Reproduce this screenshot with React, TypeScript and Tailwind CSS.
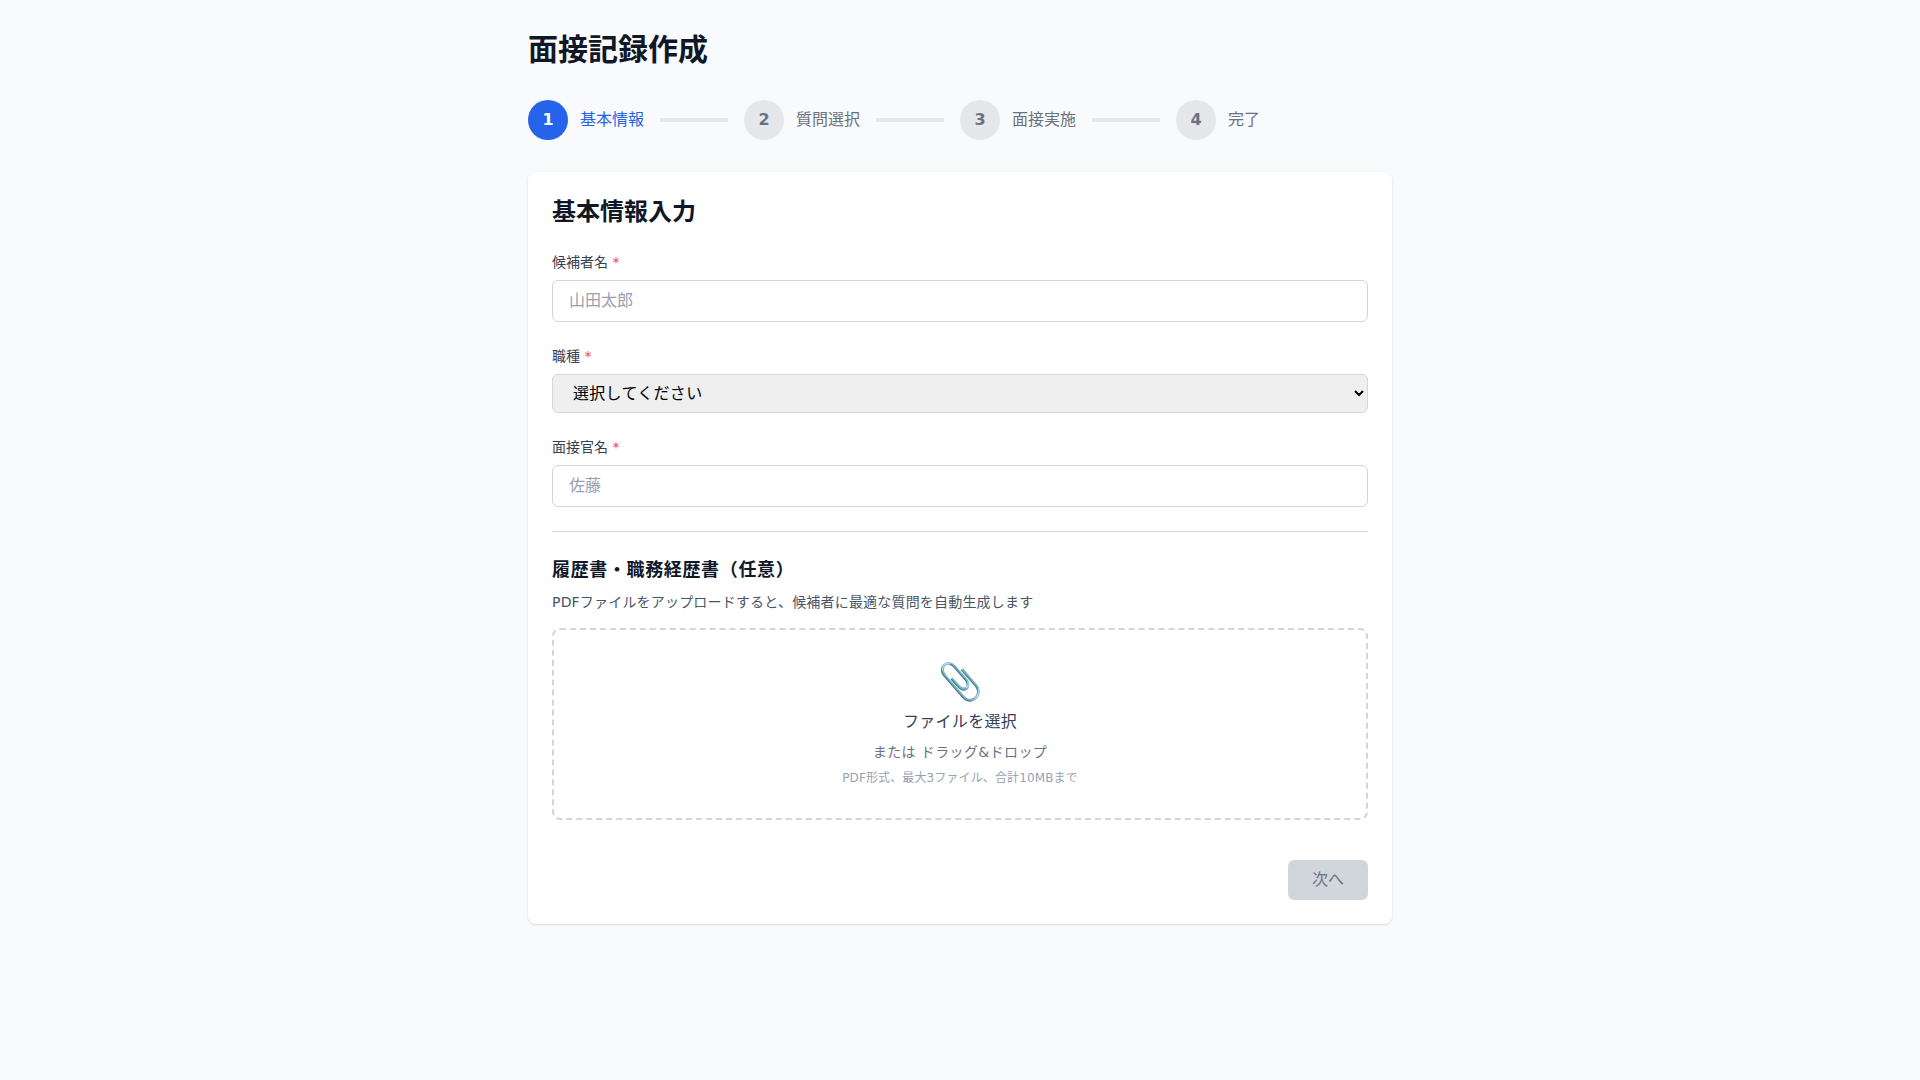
import { Fragment } from "react";

const steps = ["基本情報", "質問選択", "面接実施", "完了"];

function Label({ children }: { children: string }) {
	return (
		<label className="mb-2 block text-sm text-gray-700">
			{children} <span className="text-[#ef4444]">*</span>
		</label>
	);
}

export default function App() {
	return (
		<div className="min-h-screen bg-gray-50 font-['DejaVu_Sans','Noto_Sans_CJK_JP',sans-serif]">
			<div className="mx-auto max-w-4xl px-4 py-8">
				<h1 className="mb-8 text-3xl font-bold text-gray-900">面接記録作成</h1>
				<div className="mb-8 flex items-center">
					{steps.map((step, index) => (
						<Fragment key={step}>
							<div
								className={
									index === 0
										? "flex h-10 w-10 items-center justify-center rounded-full bg-[#2563eb] font-semibold text-white"
										: "flex h-10 w-10 items-center justify-center rounded-full bg-gray-200 font-semibold text-gray-500"
								}
							>
								{index + 1}
							</div>
							<span
								className={
									index === 0 ? "ml-3 text-[#2563eb]" : "ml-3 text-gray-500"
								}
							>
								{step}
							</span>
							{index < 3 && <div className="mx-4 h-1 w-[68px] bg-gray-200" />}
						</Fragment>
					))}
				</div>
				<div className="rounded-lg bg-white p-6 shadow">
					<h2 className="mb-6 text-2xl font-semibold text-gray-900">
						基本情報入力
					</h2>
					<div className="mb-6">
						<Label>候補者名</Label>
						<input
							placeholder="山田太郎"
							className="block w-full rounded-md border border-gray-300 px-4 py-2 placeholder:text-gray-400"
						/>
					</div>
					<div className="mb-6">
						<Label>職種</Label>
						<select className="block w-full rounded-md border border-gray-300 bg-[#efefef] px-4 py-2 tracking-[0.3px] text-black">
							<option>選択してください</option>
						</select>
					</div>
					<div className="mb-6">
						<Label>面接官名</Label>
						<input
							placeholder="佐藤"
							className="block w-full rounded-md border border-gray-300 px-4 py-2 placeholder:text-gray-400"
						/>
					</div>
					<div className="border-t border-gray-300 pt-6">
						<h3 className="mb-2 text-lg font-semibold tracking-[0.64px] text-gray-900">
							履歴書・職務経歴書（任意）
						</h3>
						<p className="mb-4 text-sm tracking-[0.19px] text-gray-600">
							PDFファイルをアップロードすると、候補者に最適な質問を自動生成します
						</p>
						<div className="rounded-lg border-2 border-dashed border-gray-300 p-8 text-center">
							<div className="mb-2 text-4xl">📎</div>
							<p className="tracking-[0.3px] text-gray-700">ファイルを選択</p>
							<p className="mt-2 text-sm tracking-[0.38px] text-gray-500">
								または ドラッグ&ドロップ
							</p>
							<p className="mt-2 text-xs tracking-[0.12px] text-gray-400">
								PDF形式、最大3ファイル、合計10MBまで
							</p>
						</div>
					</div>
					<div className="mt-10 flex justify-end">
						<button className="rounded-md bg-gray-300 px-6 py-2 text-gray-500">
							次へ
						</button>
					</div>
				</div>
			</div>
		</div>
	);
}
